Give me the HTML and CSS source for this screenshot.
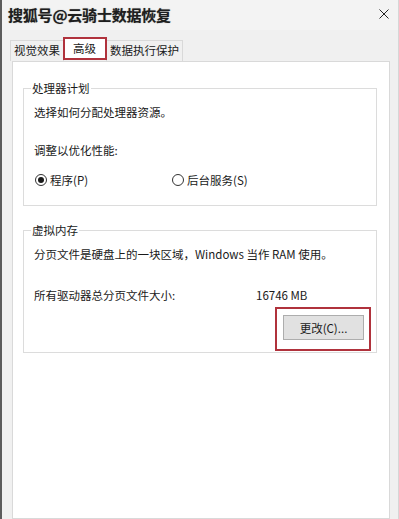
FILE: index.html
```html
<!DOCTYPE html>
<html lang="zh-CN">
<head>
<meta charset="utf-8">
<link rel="stylesheet" href="styles.css">
</head>
<body>
<div class="window">
  <div class="titlebar">
    <span class="title">搜狐号@云骑士数据恢复</span>
    <svg class="close" width="10" height="10" viewBox="0 0 10 10"><path d="M0.5 0.5 L9.5 9.5 M9.5 0.5 L0.5 9.5" stroke="#222" stroke-width="1" fill="none"/></svg>
  </div>
  <div class="tabs">
    <div class="tab">视觉效果</div>
    <div class="tab selected">高级</div>
    <div class="tab">数据执行保护</div>
  </div>
  <div class="panel">
    <fieldset class="group">
      <legend>处理器计划</legend>
      <p class="line">选择如何分配处理器资源。</p>
      <p class="line gap-l">调整以优化性能:</p>
      <div class="radios">
        <label class="radio"><span class="dot checked"></span>程序(P)</label>
        <label class="radio"><span class="dot"></span>后台服务(S)</label>
      </div>
    </fieldset>
    <fieldset class="group vm">
      <legend>虚拟内存</legend>
      <p class="line">分页文件是硬盘上的一块区域，Windows 当作 RAM 使用。</p>
      <div class="size-row">
        <span>所有驱动器总分页文件大小:</span>
        <span>16746 MB</span>
      </div>
      <div class="btn-row">
        <div class="highlight"><button class="btn">更改(C)...</button></div>
      </div>
    </fieldset>
  </div>
</div>
</body>
</html>
```

FILE: styles.css
```css
html, body {
  margin: 0;
  padding: 0;
}
body {
  width: 399px;
  height: 519px;
  overflow: hidden;
  font-family: "Noto Sans CJK SC", "Microsoft YaHei", sans-serif;
  font-size: 11.5px;
  color: #1a1a1a;
}
.window {
  width: 399px;
  height: 519px;
  box-sizing: border-box;
  border-left: 2px solid #5c5c5c;
  border-right: 1px solid #d6d6d6;
  background: #f0f0f0;
  display: flex;
  flex-direction: column;
  overflow: hidden;
}
.titlebar {
  height: 30px;
  flex: none;
  display: flex;
  align-items: center;
  justify-content: space-between;
  padding: 0 9px 0 6px;
  background: #f3f3f3;
}
.title {
  font-size: 15px;
  font-weight: bold;
  color: #1e1e1e;
  line-height: 18px;
  letter-spacing: -0.2px;
  text-shadow: 0 0 1px #888;
}
.close {
  display: block;
  margin-top: -2px;
}
.tabs {
  display: flex;
  align-items: flex-end;
  height: 24px;
  margin-top: 7px;
  padding-left: 8px;
  flex: none;
}
.tab {
  height: 21px;
  box-sizing: border-box;
  border: 1px solid #d9d9d9;
  border-bottom: none;
  padding: 0 3px;
  line-height: 19px;
  background: #f0f0f0;
  white-space: nowrap;
}
.tab + .tab {
  margin-left: -1px;
}
.tab.selected {
  height: 23px;
  margin-bottom: 1px;
  border: 2px solid #b0323c;
  background: #fff;
  padding: 0 9px 0 8px;
  line-height: 18px;
  position: relative;
  z-index: 1;
}
.panel {
  flex: 1;
  margin-left: 10px;
  width: 378px;
  box-sizing: border-box;
  border: 1px solid #d9d9d9;
  background: #fff;
  padding: 18px 12px 0 10px;
}
.group {
  margin: 0;
  border: 1px solid #dcdcdc;
  padding: 8px 5px 17px 10px;
}
.group legend {
  padding: 0 1px;
  margin-left: -3px;
  line-height: 16px;
}
.group.vm {
  margin-top: 16px;
  padding-bottom: 1px;
}
.line {
  margin: 0;
  line-height: 16px;
  white-space: nowrap;
}
.gap-l {
  margin-top: 22px;
}
.radios {
  display: grid;
  grid-template-columns: 137px auto;
  margin-top: 14px;
  line-height: 16px;
}
.radio {
  display: flex;
  align-items: center;
  padding-left: 1px;
}
.dot {
  width: 12px;
  height: 12px;
  box-sizing: border-box;
  border: 1px solid #333;
  border-radius: 50%;
  margin-right: 3px;
  display: flex;
  align-items: center;
  justify-content: center;
}
.dot.checked::after {
  content: "";
  width: 6px;
  height: 6px;
  border-radius: 50%;
  background: #1a1a1a;
}
.size-row {
  display: grid;
  grid-template-columns: 222px auto;
  margin-top: 25px;
  line-height: 16px;
}
.btn-row {
  display: flex;
  justify-content: flex-end;
  margin-top: 4px;
}
.highlight {
  border: 2px solid #b0323c;
  padding: 6px 5px 9px 6px;
}
.btn {
  display: block;
  width: 81px;
  height: 25px;
  box-sizing: border-box;
  border: 1px solid #adadad;
  background: #e1e1e1;
  font-family: inherit;
  font-size: 11.5px;
  color: #1a1a1a;
  padding: 0;
}
```
